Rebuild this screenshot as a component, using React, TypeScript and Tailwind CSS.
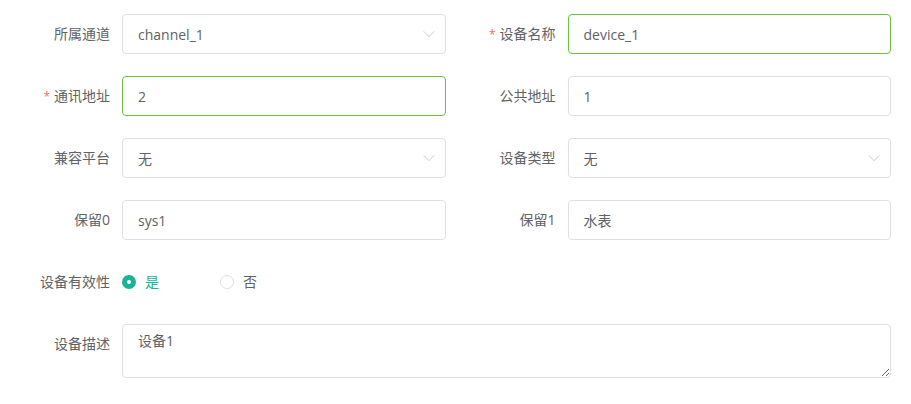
import React from 'react';

const font = { fontFamily: '"Open Sans", "Noto Sans CJK SC", sans-serif' };

const Chevron = () => (
  <svg width="14" height="14" viewBox="0 0 16 16" fill="none" className="absolute right-[10px] top-1/2 -translate-y-1/2">
    <path d="M2 5 L8 11 L14 5" stroke="#c0c4cc" strokeWidth="1" />
  </svg>
);

interface FieldProps {
  label: string;
  value: string;
  required?: boolean;
  select?: boolean;
  focus?: boolean;
}

const Field = ({ label, value, required, select, focus }: FieldProps) => (
  <div className="flex items-center h-10">
    <label className="w-[122px] shrink-0 pr-3 text-right text-sm text-[#606266]">
      {required && <span className="text-[#f56c6c] text-xs mr-[4px]">*</span>}
      {label}
    </label>
    <div className="relative flex-1 h-10">
      <input
        readOnly
        value={value}
        className={`w-full h-10 rounded border px-[15px] text-sm text-[#606266] bg-white outline-none ${
          focus ? 'border-[#67c23a]' : 'border-[#dcdfe6]'
        }`}
        style={font}
      />
      {select && <Chevron />}
    </div>
  </div>
);

export default function App() {
  return (
    <div className="bg-white w-[911px] h-[404px] pt-[14px]" style={font}>
      <div className="w-[891px] flex flex-col gap-[22px]">
        <div className="grid grid-cols-2">
          <Field label="所属通道" value="channel_1" select />
          <Field label="设备名称" value="device_1" required focus />
        </div>
        <div className="grid grid-cols-2">
          <Field label="通讯地址" value="2" required focus />
          <Field label="公共地址" value="1" />
        </div>
        <div className="grid grid-cols-2">
          <Field label="兼容平台" value="无" select />
          <Field label="设备类型" value="无" select />
        </div>
        <div className="grid grid-cols-2">
          <Field label="保留0" value="sys1" />
          <Field label="保留1" value="水表" />
        </div>
        <div className="flex items-center h-10">
          <label className="w-[122px] shrink-0 pr-3 text-right text-sm text-[#606266]">设备有效性</label>
          <div className="flex items-center">
            <span className="flex items-center w-[98px]">
              <span className="w-[14px] h-[14px] rounded-full bg-[#1ab394] flex items-center justify-center">
                <span className="w-1 h-1 rounded-full bg-white" />
              </span>
              <span className="ml-[9px] text-sm text-[#1ab394]">是</span>
            </span>
            <span className="flex items-center">
              <span className="w-[14px] h-[14px] rounded-full border border-[#dcdfe6] bg-white" />
              <span className="ml-[9px] text-sm text-[#606266]">否</span>
            </span>
          </div>
        </div>
        <div className="flex items-start">
          <label className="w-[122px] shrink-0 pr-3 text-right text-sm text-[#606266] leading-10">设备描述</label>
          <textarea
            readOnly
            value="设备1"
            className="flex-1 h-[54px] rounded border border-[#dcdfe6] px-[15px] py-[5px] text-sm leading-normal text-[#606266] outline-none resize-y"
            style={font}
          />
        </div>
      </div>
    </div>
  );
}
